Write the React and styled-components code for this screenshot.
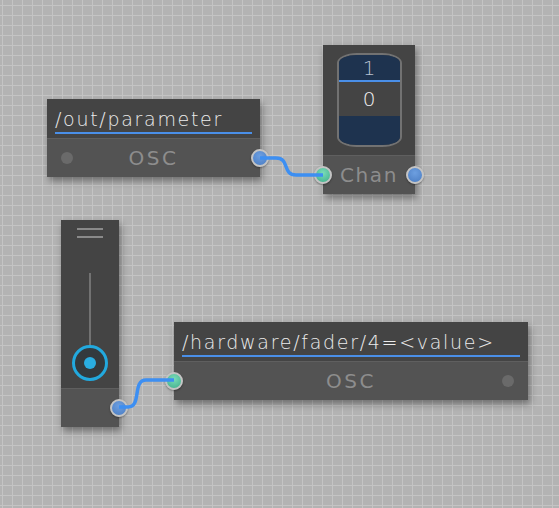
import React from 'react';
import styled, { createGlobalStyle } from 'styled-components';

//------------------------------------------------------->> Data

const wires = [
  { d: 'M260 158 L276 158 C 290 158, 282 175, 296 175 L323 175' },
  { d: 'M119 407 L128 407 C 142 407, 132 380, 146 380 L174 380' },
];

//------------------------------------------------------->> Components

const Port = ({ kind, side, inset }) => (
  <PortDot $kind={kind} $side={side} $inset={inset} />
);

const OscNode = ({ x, y, width, address, inPort, outPort }) => (
  <Node style={{ left: x, top: y, width }}>
    <Header>
      <Address>{address}</Address>
    </Header>
    <Body>
      <Port kind={inPort} side="left" inset={inPort === 'none' ? 14 : 0} />
      <Label>OSC</Label>
      <Port kind={outPort} side="right" inset={outPort === 'none' ? 14 : 0} />
    </Body>
  </Node>
);

const ChanNode = () => (
  <Node style={{ left: 323, top: 45, width: 92 }}>
    <DrumHeader>
      <Drum>
        <DrumCell $tone="navy" $h={25}>1</DrumCell>
        <DrumDivider />
        <DrumCell $tone="grey" $h={34} $bright>0</DrumCell>
        <DrumCell $tone="navy" $h={31} />
      </Drum>
    </DrumHeader>
    <Body>
      <Port kind="in" side="left" inset={0} />
      <Label $big>Chan</Label>
      <Port kind="out" side="right" inset={0} />
    </Body>
  </Node>
);

const FaderNode = () => (
  <Node style={{ left: 61, top: 220, width: 58 }}>
    <FaderHeader>
      <Grip />
      <Grip />
      <Track />
      <Knob>
        <KnobDot />
      </Knob>
    </FaderHeader>
    <Body>
      <Port kind="out" side="right" inset={0} />
    </Body>
  </Node>
);

export default function App() {
  return (
    <>
      <GlobalStyle />
      <Canvas>
        <OscNode x={47} y={99} width={213} address="/out/parameter" inPort="none" outPort="out" />
        <ChanNode />
        <FaderNode />
        <OscNode x={174} y={322} width={354} address="/hardware/fader/4=<value>" inPort="in" outPort="none" />
        <Wires width="559" height="508">
          {wires.map((w, i) => (
            <path key={i} d={w.d} />
          ))}
        </Wires>
      </Canvas>
    </>
  );
}

//------------------------------------------------------->> Styling

const GlobalStyle = createGlobalStyle`
  html, body {
    margin: 0;
    padding: 0;
    background: #b4b4b4;
  }
`;

const Canvas = styled.div`
  position: relative;
  width: 559px;
  height: 508px;
  overflow: hidden;
  background-color: #b3b3b3;
  background-image:
    linear-gradient(#c4c4c4 1px, transparent 1px),
    linear-gradient(90deg, #c4c4c4 1px, transparent 1px);
  background-size: 10px 10px;
  background-position: 2px 5px;
  font-family: 'DejaVu Sans', sans-serif;
`;

const Wires = styled.svg`
  position: absolute;
  inset: 0;
  pointer-events: none;

  path {
    fill: none;
    stroke: #3d8ff2;
    stroke-width: 3.5;
  }
`;

const Node = styled.div`
  position: absolute;
  display: flex;
  flex-direction: column;
  background: #444;
  box-shadow: 2px 4px 7px rgba(0, 0, 0, 0.38);
`;

const Header = styled.div`
  height: 39px;
  padding: 0 8px;
  display: flex;
  align-items: flex-end;
  background: #444;
`;

const Address = styled.div`
  flex: 1;
  padding-bottom: 1px;
  margin-bottom: 4px;
  border-bottom: 2px solid #4a8fe8;
  color: #ececec;
  font-size: 19px;
  font-weight: 200;
  line-height: 24px;
  letter-spacing: 1.7px;
  white-space: nowrap;
`;

const Body = styled.div`
  position: relative;
  height: 38px;
  display: flex;
  align-items: center;
  justify-content: center;
  background: #535353;
  border-top: 1px solid #5f5f5f;
`;

const Label = styled.span`
  color: #8d8d8d;
  font-size: 20px;
  letter-spacing: ${(p) => (p.$big ? '1.6px' : '2.6px')};
`;

const PortDot = styled.span`
  position: absolute;
  top: 50%;
  ${(p) => p.$side}: ${(p) => (p.$kind === 'none' ? p.$inset : -9) + 'px'};
  transform: translateY(-50%);
  box-sizing: border-box;
  border-radius: 50%;
  width: ${(p) => (p.$kind === 'none' ? '12px' : '18px')};
  height: ${(p) => (p.$kind === 'none' ? '12px' : '18px')};
  background: ${(p) =>
    p.$kind === 'in'
      ? 'radial-gradient(circle at 50% 35%, #7adcb9, #3fae8a)'
      : p.$kind === 'out'
      ? 'radial-gradient(circle at 50% 35%, #6d9fe0, #4a7cc2)'
      : '#6a6a6a'};
  border: ${(p) => (p.$kind === 'none' ? 'none' : '2px solid #c4c4c4')};
  box-shadow: ${(p) => (p.$kind === 'none' ? 'none' : '0 1px 2px rgba(0,0,0,0.35)')};
`;

const DrumHeader = styled.div`
  height: 110px;
  display: flex;
  justify-content: center;
  padding-top: 8px;
  box-sizing: border-box;
`;

const Drum = styled.div`
  width: 65px;
  height: 94px;
  box-sizing: border-box;
  border: 2px solid #727272;
  border-radius: 20px / 10px;
  overflow: hidden;
  display: flex;
  flex-direction: column;
`;

const DrumCell = styled.div`
  height: ${(p) => p.$h}px;
  flex: none;
  display: flex;
  align-items: center;
  justify-content: center;
  background: ${(p) => (p.$tone === 'navy' ? '#1e334f' : '#444')};
  color: ${(p) => (p.$bright ? '#f2f2f2' : '#b9c3d1')};
  font-size: 20px;
  font-weight: 200;
`;

const DrumDivider = styled.div`
  height: 2px;
  flex: none;
  background: #4a8fe8;
`;

const FaderHeader = styled.div`
  height: 168px;
  display: flex;
  flex-direction: column;
  align-items: center;
  padding-top: 8px;
  box-sizing: border-box;
`;

const Grip = styled.div`
  width: 26px;
  height: 1.5px;
  background: #8a8a8a;
  margin-bottom: 6.5px;
`;

const Track = styled.div`
  width: 2px;
  height: 72px;
  margin-top: 29px;
  background: #727272;
`;

const Knob = styled.div`
  width: 36px;
  height: 36px;
  box-sizing: border-box;
  border-radius: 50%;
  border: 3px solid #22a9de;
  background: #333a3e;
  display: flex;
  align-items: center;
  justify-content: center;
`;

const KnobDot = styled.div`
  width: 12px;
  height: 12px;
  border-radius: 50%;
  background: #2aaee2;
`;
